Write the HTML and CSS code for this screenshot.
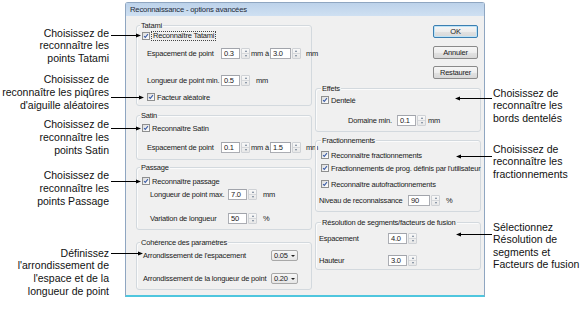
FILE: index.html
```html
<!DOCTYPE html>
<html>
<head>
  <title>Reconnaissance - options avancées</title>
  <link rel="stylesheet" href="styles.css">
</head>
<body>
  <div class="figure">
    <div class="notes notes-left">
      <p class="note">Choisissez de<br>reconnaître les<br>points Tatami</p>
      <p class="note note-random">Choisissez de<br>reconnaître les piqûres<br>d'aiguille aléatoires</p>
      <p class="note note-satin">Choisissez de<br>reconnaître les<br>points Satin</p>
      <p class="note note-passage">Choisissez de<br>reconnaître les<br>points Passage</p>
      <p class="note note-round">Définissez<br>l'arrondissement de<br>l'espace et de la<br>longueur de point</p>
    </div>

    <div class="dialog">
      <div class="titlebar">Reconnaissance - options avancées</div>
      <div class="dialog-body">

        <div class="col col-left">
          <div class="group group-tatami">
            <div class="group-title">Tatami</div>
            <div class="row">
              <span class="box"><svg viewBox="0 0 8 8"><path d="M1.4 4.1 L3.1 5.9 L6.6 1.5"/></svg></span>
              <span class="focus">Reconnaître Tatami</span>
            </div>
            <div class="row mt-5 indent-5">
              <span class="label">Espacement de point</span>
              <span class="spin"><span class="field">0.3</span><span class="arrows"><i class="up"></i><i class="down"></i></span></span>
              <span class="unit unit-pair">mm à</span>
              <span class="spin"><span class="field w21">3.0</span><span class="arrows"><i class="up"></i><i class="down"></i></span></span>
              <span class="unit unit-5">mm</span>
            </div>
            <div class="row mt-15 indent-5">
              <span class="label">Longueur de point min.</span>
              <span class="spin"><span class="field">0.5</span><span class="arrows"><i class="up"></i><i class="down"></i></span></span>
              <span class="unit unit-6">mm</span>
            </div>
            <div class="row mt-5 indent-5">
              <span class="box"><svg viewBox="0 0 8 8"><path d="M1.4 4.1 L3.1 5.9 L6.6 1.5"/></svg></span>
              <span>Facteur aléatoire</span>
            </div>
          </div>

          <div class="group group-satin">
            <div class="group-title">Satin</div>
            <div class="row mt-2">
              <span class="box"><svg viewBox="0 0 8 8"><path d="M1.4 4.1 L3.1 5.9 L6.6 1.5"/></svg></span>
              <span>Reconnaître Satin</span>
            </div>
            <div class="row mt-7 indent-5">
              <span class="label">Espacement de point</span>
              <span class="spin"><span class="field">0.1</span><span class="arrows"><i class="up"></i><i class="down"></i></span></span>
              <span class="unit unit-pair">mm à</span>
              <span class="spin"><span class="field w21">1.5</span><span class="arrows"><i class="up"></i><i class="down"></i></span></span>
              <span class="unit unit-5">mm</span>
            </div>
          </div>

          <div class="group group-passage">
            <div class="group-title">Passage</div>
            <div class="row mt-3">
              <span class="box"><svg viewBox="0 0 8 8"><path d="M1.4 4.1 L3.1 5.9 L6.6 1.5"/></svg></span>
              <span>Reconnaître passage</span>
            </div>
            <div class="row mt-1 indent-8">
              <span class="label">Longueur de point max.</span>
              <span class="spin"><span class="field">7.0</span><span class="arrows"><i class="up"></i><i class="down"></i></span></span>
              <span class="unit unit-6">mm</span>
            </div>
            <div class="row mt-12 indent-8">
              <span class="label">Variation de longueur</span>
              <span class="spin"><span class="field">50</span><span class="arrows"><i class="up"></i><i class="down"></i></span></span>
              <span class="unit unit-6">%</span>
            </div>
          </div>

          <div class="group group-coherence">
            <div class="group-title">Cohérence des paramètres</div>
            <div class="row mt-2 indent-1">
              <span class="label">Arrondissement de l'espacement</span>
              <span class="combo">0.05<i class="caret"></i></span>
            </div>
            <div class="row mt-11 indent-1">
              <span class="label">Arrondissement de la longueur de point</span>
              <span class="combo">0.20<i class="caret"></i></span>
            </div>
          </div>
        </div>

        <div class="col col-right">
          <div class="buttons">
            <button class="btn btn-default">OK</button>
            <button class="btn btn-cancel">Annuler</button>
            <button class="btn btn-restore">Restaurer</button>
          </div>

          <div class="group group-right group-effets">
            <div class="group-title">Effets</div>
            <div class="row mt-1 indent-2">
              <span class="box"><svg viewBox="0 0 8 8"><path d="M1.4 4.1 L3.1 5.9 L6.6 1.5"/></svg></span>
              <span>Dentelé</span>
            </div>
            <div class="row mt-8 indent-29">
              <span class="label">Domaine min.</span>
              <span class="spin"><span class="field">0.1</span><span class="arrows"><i class="up"></i><i class="down"></i></span></span>
              <span class="unit unit-2">mm</span>
            </div>
          </div>

          <div class="group group-right group-fract">
            <div class="group-title">Fractionnements</div>
            <div class="row mt-4 indent-2">
              <span class="box"><svg viewBox="0 0 8 8"><path d="M1.4 4.1 L3.1 5.9 L6.6 1.5"/></svg></span>
              <span>Reconnaître fractionnements</span>
            </div>
            <div class="row mt-1 indent-2">
              <span class="box"><svg viewBox="0 0 8 8"><path d="M1.4 4.1 L3.1 5.9 L6.6 1.5"/></svg></span>
              <span>Fractionnements de prog. définis par l'utilisateur</span>
            </div>
            <div class="row mt-4 indent-2">
              <span class="box"><svg viewBox="0 0 8 8"><path d="M1.4 4.1 L3.1 5.9 L6.6 1.5"/></svg></span>
              <span>Reconnaître autofractionnements</span>
            </div>
            <div class="row mt-4">
              <span class="label">Niveau de reconnaissance</span>
              <span class="spin"><span class="field w22">90</span><span class="arrows"><i class="up"></i><i class="down"></i></span></span>
              <span class="unit unit-6">%</span>
            </div>
          </div>

          <div class="group group-right group-resol">
            <div class="group-title">Résolution de segments/facteurs de fusion</div>
            <div class="row mt-5">
              <span class="label">Espacement</span>
              <span class="spin"><span class="field">4.0</span><span class="arrows"><i class="up"></i><i class="down"></i></span></span>
            </div>
            <div class="row mt-10">
              <span class="label">Hauteur</span>
              <span class="spin"><span class="field">3.0</span><span class="arrows"><i class="up"></i><i class="down"></i></span></span>
            </div>
          </div>
        </div>

      </div>
    </div>

    <div class="notes notes-right">
      <p class="note">Choisissez de<br>reconnaître les<br>bords dentelés</p>
      <p class="note note-fract">Choisissez de<br>reconnaître les<br>fractionnements</p>
      <p class="note note-resol">Sélectionnez<br>Résolution de<br>segments et<br>Facteurs de fusion</p>
    </div>

    <!-- callout arrows drawn over the dialog -->
    <svg class="callouts" width="583" height="316" viewBox="0 0 583 316">
      <g stroke="#000" stroke-width="1">
        <line x1="111" y1="35.5" x2="137" y2="35.5"/>
        <line x1="111" y1="97.5" x2="140" y2="97.5"/>
        <line x1="111" y1="128.5" x2="137" y2="128.5"/>
        <line x1="111" y1="181.5" x2="137" y2="181.5"/>
        <line x1="111" y1="253.5" x2="139" y2="253.5"/>
        <line x1="460" y1="98.5" x2="492" y2="98.5"/>
        <line x1="461" y1="156.5" x2="492" y2="156.5"/>
        <line x1="461" y1="234.5" x2="492" y2="234.5"/>
      </g>
      <g fill="#000">
        <polygon points="141,35.5 136,33.5 136,37.5"/>
        <polygon points="144,97.5 139,95.5 139,99.5"/>
        <polygon points="141,128.5 136,126.5 136,130.5"/>
        <polygon points="141,181.5 136,179.5 136,183.5"/>
        <polygon points="143,253.5 138,251.5 138,255.5"/>
        <polygon points="455,98.5 460,96.5 460,100.5"/>
        <polygon points="456,156.5 461,154.5 461,158.5"/>
        <polygon points="456,234.5 461,232.5 461,236.5"/>
      </g>
    </svg>
  </div>
</body>
</html>
```

FILE: styles.css
```css
body {
  margin: 0;
  background: #fff;
  font-family: "Liberation Sans", Arial, sans-serif;
}

.figure {
  position: relative;
  display: flex;
  width: 583px;
  height: 316px;
  overflow: hidden;
}

/* annotations */
.notes {
  font-size: 10.5px;
  line-height: 12.7px;
  color: #111;
}

.notes .note {
  margin: 0;
}

.notes-left {
  width: 125px;
  flex: none;
  box-sizing: border-box;
  padding: 26.7px 16px 0 0;
  text-align: right;
}

.notes .note-random { margin-top: 8.4px; }
.notes .note-satin { margin-top: 6.9px; }
.notes .note-passage { margin-top: 12.9px; }
.notes .note-round { margin-top: 39.4px; }

.notes-right {
  flex: 1;
  padding: 86.7px 0 0 8px;
  line-height: 12.5px;
  white-space: nowrap;
}

.notes .note-fract { margin-top: 18.5px; }
.notes .note-resol { margin-top: 40.5px; }

.callouts {
  position: absolute;
  top: 0;
  left: 0;
  pointer-events: none;
}

/* dialog */
.dialog {
  width: 360px;
  height: 295px;
  margin-top: 2px;
  flex: none;
  box-sizing: border-box;
  border: 1px solid #8fa6c1;
  border-bottom: 2px solid #4fc6de;
  border-radius: 3px 3px 0 0;
  background: #f0f0f0;
  font-size: 7.5px;
  letter-spacing: -0.2px;
  color: #1a1a1a;
  display: flex;
  flex-direction: column;
}

.titlebar {
  height: 13px;
  line-height: 13px;
  padding-left: 4px;
  font-size: 7.7px;
  color: #1e2a3a;
  background: linear-gradient(#bcd2ea, #cfe0f2);
}

.dialog-body {
  flex: 1;
  display: flex;
  gap: 3px;
  padding-left: 10px;
}

.col {
  display: flex;
  flex-direction: column;
}

.col-left {
  width: 176px;
}

.col-right {
  width: 166px;
}

/* group boxes */
.group {
  border: 1px solid #d3d9de;
  border-radius: 3px;
  padding-left: 5px;
  box-shadow: inset 1px 1px 0 #fbfbfb;
}

.group-right {
  padding-left: 3px;
}

.group-title {
  height: 9px;
  line-height: 9px;
  width: max-content;
  margin: -5px 0 0 -2px;
  padding: 0 1px;
  background: #f0f0f0;
}

.group-right .group-title {
  margin-left: 2px;
}

.group-tatami { margin-top: 9px; padding-bottom: 2px; }
.group-satin { margin-top: 9px; padding-bottom: 6px; }
.group-passage { margin-top: 7px; padding-bottom: 5px; }
.group-coherence { margin-top: 12px; padding-bottom: 5px; }
.group-effets { margin-top: 9px; padding-bottom: 5px; }
.group-fract { margin-top: 8px; padding-bottom: 5px; }
.group-resol { margin-top: 10px; padding-bottom: 3px; }

.group-tatami .label,
.group-satin .label { width: 74px; }
.group-passage .label { width: 78px; }
.group-coherence .label { width: 128px; }
.group-effets .label { width: 49px; }
.group-fract .label { width: 89px; }
.group-resol .label { width: 69px; }

.row {
  display: flex;
  align-items: center;
  height: 12px;
  white-space: nowrap;
}

.mt-1 { margin-top: 1px; }
.mt-2 { margin-top: 2px; }
.mt-3 { margin-top: 3px; }
.mt-4 { margin-top: 4px; }
.mt-5 { margin-top: 5px; }
.mt-7 { margin-top: 7px; }
.mt-8 { margin-top: 8px; }
.mt-10 { margin-top: 10px; }
.mt-11 { margin-top: 11px; }
.mt-12 { margin-top: 12px; }
.mt-15 { margin-top: 15px; }

.indent-1 { padding-left: 1px; }
.indent-2 { padding-left: 2px; }
.indent-5 { padding-left: 5px; }
.indent-8 { padding-left: 8px; }
.indent-29 { padding-left: 29px; }

.label {
  flex: none;
}

/* checkbox */
.box {
  width: 8px;
  height: 8px;
  flex: none;
  box-sizing: border-box;
  margin-right: 2px;
  border: 1px solid #8e8f8f;
  background: linear-gradient(135deg, #dcdcdc, #fff);
}

.box svg {
  display: block;
  width: 6px;
  height: 6px;
  fill: none;
  stroke: #3d5ea8;
  stroke-width: 1.4;
}

.focus {
  outline: 1px dotted #444;
  padding: 0 1px;
  line-height: 8px;
}

/* spin edit */
.spin {
  display: flex;
  height: 11px;
}

.field {
  width: 19px;
  height: 11px;
  box-sizing: border-box;
  padding-left: 2px;
  line-height: 9px;
  border: 1px solid #abadb3;
  border-top-color: #a1a4ab;
  background: #fff;
}

.field.w21 { width: 21px; }
.field.w22 { width: 22px; }

.arrows {
  width: 9px;
  margin-left: 1px;
  box-sizing: border-box;
  display: flex;
  flex-direction: column;
  border: 1px solid #cfd2d6;
  border-radius: 1px;
  background: linear-gradient(#f8f8f8, #e8e8e8);
}

.arrows i {
  flex: 1;
  display: flex;
  align-items: center;
  justify-content: center;
}

.arrows i + i {
  border-top: 1px solid #d6d8db;
}

.arrows .up::before,
.arrows .down::before {
  content: "";
  border-left: 1.5px solid transparent;
  border-right: 1.5px solid transparent;
}

.arrows .up::before {
  border-bottom: 2px solid #6f7f93;
}

.arrows .down::before {
  border-top: 2px solid #6f7f93;
}

.unit-pair {
  width: 18px;
  margin: 0 1px;
}

.unit-2 { margin-left: 2px; }
.unit-5 { margin-left: 5px; }
.unit-6 { margin-left: 6px; }

/* dropdown */
.combo {
  position: relative;
  width: 27px;
  height: 11px;
  box-sizing: border-box;
  padding-left: 2px;
  line-height: 9px;
  border: 1px solid #a8a8a8;
  border-radius: 2px;
  background: linear-gradient(#f7f7f7, #e6e6e6);
}

.caret {
  position: absolute;
  right: 2px;
  top: 4px;
  border-left: 2px solid transparent;
  border-right: 2px solid transparent;
  border-top: 2px solid #222;
}

/* buttons */
.buttons {
  display: flex;
  flex-direction: column;
  align-items: flex-end;
  padding-right: 3px;
}

.btn {
  width: 45px;
  height: 13px;
  padding: 0;
  border: 1px solid #8a8a8a;
  border-radius: 2px;
  background: linear-gradient(#f6f6f6 0%, #ededed 50%, #e2e2e2 51%, #d8d8d8 100%);
  font-family: inherit;
  font-size: 7.5px;
  letter-spacing: -0.2px;
  color: #1a1a1a;
}

.btn-default {
  margin-top: 9px;
  border-color: #3c7fb1;
  box-shadow: inset 0 0 0 1px #bde3f7;
}

.btn-cancel { margin-top: 8px; }
.btn-restore { margin-top: 7px; }
```
